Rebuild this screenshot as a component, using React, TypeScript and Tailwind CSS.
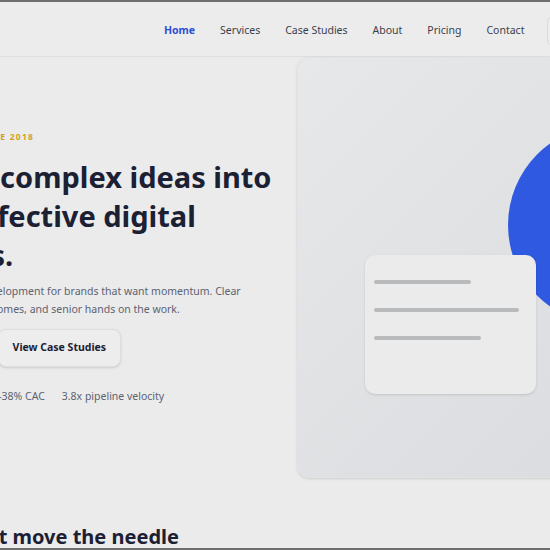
import React from 'react';

const navLinks = ['Home', 'Services', 'Case Studies', 'About', 'Pricing', 'Contact'];

const stats = ['+64% qualified leads', '-38% CAC', '3.8x pipeline velocity'];

const App: React.FC = () => {
  return (
    <div
      className="w-[550px] h-[550px] overflow-hidden bg-[#ebebeb] border-t-2 border-b-2 border-[#6e6e6e] text-[#1c2033]"
      style={{ fontFamily: '"Noto Sans", "Open Sans", sans-serif' }}
    >
      {/* Header */}
      <header className="h-[55px] border-b border-[#dfdfdf] bg-[#ececec] flex items-center pl-[164px] pt-[3px]">
        <nav className="flex items-center gap-[25px] shrink-0">
          {navLinks.map((link, i) => (
            <a
              key={link}
              className={
                i === 0
                  ? 'text-[10.5px] font-bold text-[#2f4fd4]'
                  : 'text-[10.5px] text-[#3a3f4c]'
              }
            >
              {link}
            </a>
          ))}
          <button className="ml-[-2px] h-[32px] px-4 rounded-lg border border-[#d8d8d8] bg-[#efefef] text-[10.5px] font-bold shrink-0">
            Get in touch
          </button>
        </nav>
      </header>

      {/* Hero */}
      <section className="flex items-center ml-[-120px]">
        <div className="w-[417px] shrink-0 flex flex-col">
          <p className="text-[8.5px] leading-[12px] font-bold tracking-[0.15em] text-[#d4a11e] ml-[-5px]">
            GROWTH STUDIO · SINCE 2018
          </p>
          <h1 className="mt-[14px] ml-[-3px] text-[29px] leading-[39px] font-bold text-[#1c2033]">
            We turn complex ideas into
            <br />
            sleek, effective digital
            <br />
            products.
          </h1>
          <p className="mt-[8px] text-[10.5px] leading-[18px] text-[#5b6272]">
            Growth, design and development for brands that want momentum. Clear
            <br />
            scope, measurable outcomes, and senior hands on the work.
          </p>
          <div className="mt-[11px] flex gap-[15px]">
            <button className="h-[38px] px-[14px] rounded-lg bg-[#2f59e0] text-white text-[10.5px] font-bold">
              Start a Project
            </button>
            <button className="h-[38px] px-[14px] rounded-lg border border-[#dedede] bg-[#ededed] shadow-sm text-[10.5px] font-bold text-[#1c2033]">
              View Case Studies
            </button>
          </div>
          <div className="mt-[21px] flex gap-[17px] text-[10.5px] leading-[16px] text-[#5b6272]">
            {stats.map(s => (
              <span key={s}>{s}</span>
            ))}
          </div>
        </div>

        {/* Illustration card */}
        <div className="relative w-[420px] h-[421px] shrink-0 rounded-xl border border-[#e2e3e5] bg-gradient-to-br from-[#e7e8ea] to-[#d8dadd] overflow-hidden shadow-sm">
          <div className="absolute left-[210px] top-[67px] w-[200px] h-[200px] rounded-full bg-[#2f59e0]" />
          <div className="absolute left-[67px] top-[197px] w-[171px] h-[139px] rounded-[10px] bg-[#ebebeb] shadow-sm px-[9px] pt-[25px] flex flex-col gap-[24px]">
            <div className="h-[4px] w-[97px] rounded-full bg-[#b9babc]" />
            <div className="h-[4px] w-[145px] rounded-full bg-[#b9babc]" />
            <div className="h-[4px] w-[107px] rounded-full bg-[#b9babc]" />
          </div>
        </div>
      </section>

      {/* Next section */}
      <section className="ml-[-113px] mt-[45px]">
        <h2 className="text-[20px] leading-[28px] font-bold text-[#1c2033]">
          Results that move the needle
        </h2>
      </section>
    </div>
  );
};

export default App;
